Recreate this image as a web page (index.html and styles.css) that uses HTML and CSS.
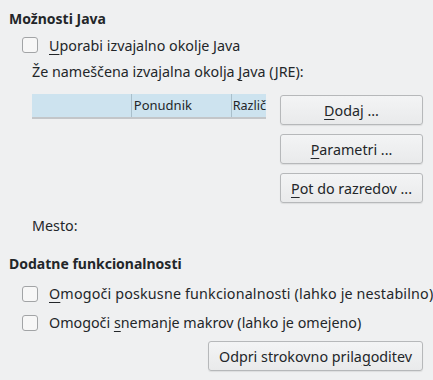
FILE: index.html
```html
<!DOCTYPE html>
<html lang="sl">
<head>
    <meta charset="UTF-8">
    <title>Možnosti Java</title>
    <link rel="stylesheet" href="styles.css">
</head>
<body>

<!-- Java options -->
<div class="section">
    <div class="heading">Možnosti Java</div>
    <label class="check-row first">
        <span class="checkbox"></span>
        <span><u>U</u>porabi izvajalno okolje Java</span>
    </label>
    <div class="sub">Že nameščena izvajalna okolja <u>J</u>ava (JRE):</div>

    <div class="jre-area">
        <div class="jre-table">
            <div class="jre-head">
                <div class="col col-check"></div>
                <div class="col col-vendor">Ponudnik</div>
                <div class="col col-version">Različ</div>
            </div>
        </div>
        <div class="side-buttons">
            <button><u>D</u>odaj ...</button>
            <button><u>P</u>arametri ...</button>
            <button><u>P</u>ot do razredov ...</button>
        </div>
    </div>

    <div class="sub location">Mesto:</div>
</div>

<!-- Extra features -->
<div class="section">
    <div class="heading second">Dodatne funkcionalnosti</div>
    <label class="check-row">
        <span class="checkbox"></span>
        <span class="wide"><u>O</u>mogoči poskusne funkcionalnosti (lahko je nestabilno)</span>
    </label>
    <label class="check-row">
        <span class="checkbox"></span>
        <span>Omogoči <u>s</u>nemanje makrov (lahko je omejeno)</span>
    </label>
    <div class="bottom-row">
        <button class="expert">Odpri strokovno prila<u>g</u>oditev</button>
    </div>
</div>

</body>
</html>
```

FILE: styles.css
```css
body {
    font-family: "Noto Sans", sans-serif;
    font-size: 14.3px;
    background-color: #eff0f1;
    color: #232629;
    margin: 0;
    padding: 0 10px 0 9px;
    width: 433px;
    height: 380px;
    box-sizing: border-box;
    overflow: hidden;
}
u {
    text-decoration-thickness: 1px;
    text-underline-offset: 3px;
}
.heading {
    font-weight: bold;
    font-size: 14px;
    height: 20px;
    line-height: 20px;
    margin-top: 9px;
}
.heading.second {
    margin-top: 17px;
}
.check-row {
    display: flex;
    align-items: center;
    gap: 11px;
    height: 29px;
    padding-left: 13px;
    white-space: nowrap;
}
.check-row.first {
    height: 32px;
}
.wide {
    letter-spacing: 0.17px;
}
.checkbox {
    width: 14px;
    height: 14px;
    border: 1px solid #a2a4a6;
    border-radius: 3px;
    background: #f7f7f7;
    flex-shrink: 0;
}
.heading.second + .check-row {
    margin-top: 5px;
}
.sub {
    padding-left: 23px;
    height: 22px;
    line-height: 22px;
}
.jre-area {
    display: flex;
    align-items: flex-start;
    margin-top: 11px;
    padding-left: 23px;
}
.jre-table {
    width: 234px;
}
.jre-head {
    display: flex;
    height: 23px;
    background-color: #cde3ef;
    box-shadow: 0 2px 0 #c3c6c9;
}
.col {
    line-height: 23px;
    font-size: 13px;
    padding-left: 2px;
    white-space: nowrap;
}
.col-check {
    width: 97px;
    border-right: 1px solid #a9bfcb;
}
.col-vendor {
    width: 97px;
    border-right: 1px solid #a9bfcb;
}
.col-version {
    flex: 1;
    padding-left: 1px;
    font-size: 12.6px;
}
.side-buttons {
    display: flex;
    flex-direction: column;
    gap: 9px;
    margin-left: 14px;
    margin-top: 1px;
    width: 143px;
}
button {
    font-family: "Noto Sans", sans-serif;
    font-size: 14.3px;
    color: #232629;
    background: linear-gradient(#f3f4f5, #e9eaeb);
    border: 1px solid #b6b8ba;
    border-radius: 3px;
    height: 30px;
    padding: 0 6px;
    white-space: nowrap;
    box-shadow: 0 1px 1px rgba(0, 0, 0, 0.08);
}
.location {
    margin-top: 12px;
}
.bottom-row {
    display: flex;
    justify-content: flex-end;
    margin-top: 4px;
}
.expert {
    width: 215px;
}
```
